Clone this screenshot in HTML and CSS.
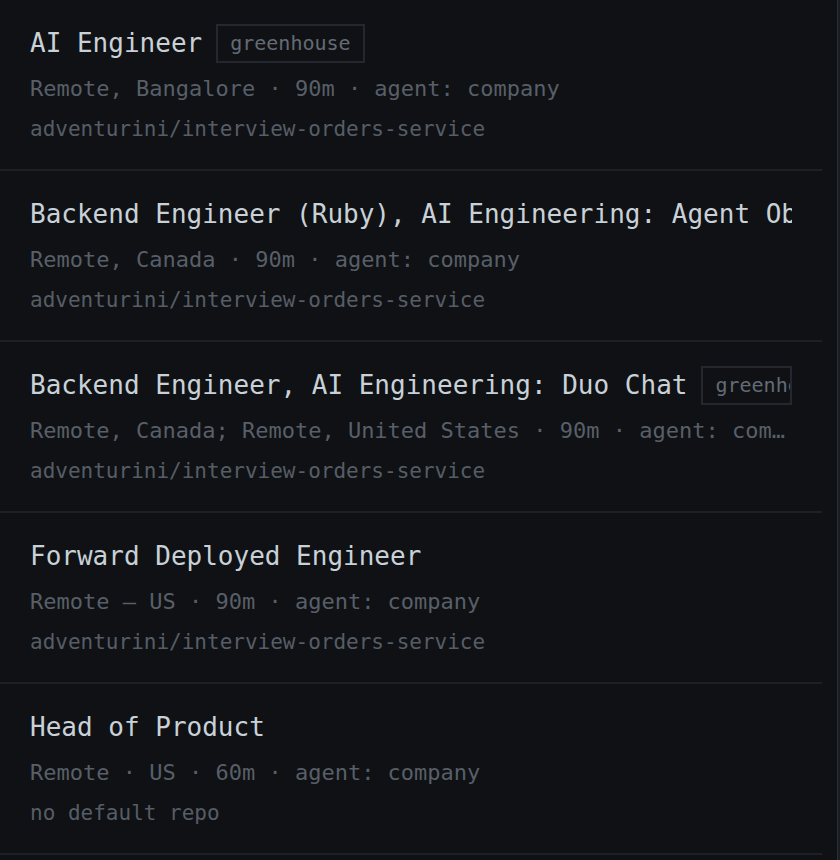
FILE: index.html
```html
<!DOCTYPE html>
<html lang="en">
<head>
<meta charset="utf-8">
<title>Jobs</title>
<link rel="stylesheet" href="styles.css">
</head>
<body>
<div class="shell">
  <ul class="jobs">
    <li class="job">
      <div class="title-row"><span class="title">AI Engineer</span><span class="badge">greenhouse</span></div>
      <div class="meta">Remote, Bangalore · 90m · agent: company</div>
      <div class="repo">adventurini/interview-orders-service</div>
    </li>
    <li class="job">
      <div class="title-row"><span class="title">Backend Engineer (Ruby), AI Engineering: Agent Observability</span></div>
      <div class="meta">Remote, Canada · 90m · agent: company</div>
      <div class="repo">adventurini/interview-orders-service</div>
    </li>
    <li class="job">
      <div class="title-row"><span class="title">Backend Engineer, AI Engineering: Duo Chat</span><span class="badge">greenhouse</span></div>
      <div class="meta">Remote, Canada; Remote, United States · 90m · agent: company</div>
      <div class="repo">adventurini/interview-orders-service</div>
    </li>
    <li class="job">
      <div class="title-row"><span class="title">Forward Deployed Engineer</span></div>
      <div class="meta">Remote – US · 90m · agent: company</div>
      <div class="repo">adventurini/interview-orders-service</div>
    </li>
    <li class="job">
      <div class="title-row"><span class="title">Head of Product</span></div>
      <div class="meta">Remote · US · 60m · agent: company</div>
      <div class="repo">no default repo</div>
    </li>
  </ul>
  <div class="edge"></div>
</div>
</body>
</html>
```
FILE: styles.css
```css
html, body {
  margin: 0;
  padding: 0;
  background: #0f1114;
  height: 100%;
}
body {
  font-family: "DejaVu Sans Mono", "Liberation Mono", monospace;
  overflow: hidden;
}
.shell {
  display: flex;
  height: 860px;
}
.jobs {
  list-style: none;
  margin: 0;
  padding: 0;
  flex: 0 0 822px;
  width: 822px;
}
.job {
  padding: 23px 30px 20px 30px;
  border-bottom: 2px solid #1d2025;
}
.title-row {
  display: flex;
  align-items: center;
  overflow: hidden;
  height: 40px;
}
.title {
  font-size: 26px;
  line-height: 40px;
  color: #c9d1d8;
  white-space: nowrap;
}
.badge {
  margin-left: 14px;
  min-width: 0;
  overflow: hidden;
  white-space: nowrap;
  font-size: 20px;
  line-height: 35px;
  padding: 0 12px;
  color: #646b74;
  border: 2px solid #24272d;
}
.meta {
  margin-top: 6px;
  font-size: 22px;
  line-height: 40px;
  color: #585f68;
  white-space: nowrap;
  overflow: hidden;
  text-overflow: ellipsis;
}
.repo {
  font-size: 21px;
  line-height: 40px;
  color: #565d66;
  white-space: nowrap;
  overflow: hidden;
  text-overflow: ellipsis;
}
.edge {
  margin-left: auto;
  width: 2px;
  border-left: 1px solid #2a2d33;
  background: #1a1d21;
}
```
